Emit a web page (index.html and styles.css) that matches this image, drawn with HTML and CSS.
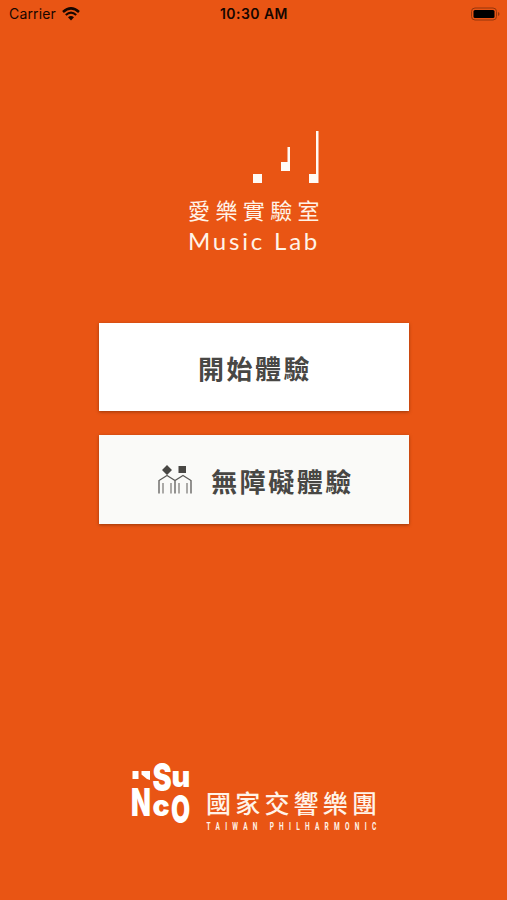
FILE: index.html
```html
<!DOCTYPE html>
<html lang="zh-Hant">
<head>
    <meta charset="UTF-8">
    <meta name="viewport" content="width=device-width, initial-scale=1.0">
    <title>愛樂實驗室 Music Lab</title>
    <link rel="stylesheet" href="styles.css">
</head>
<body>
    <div class="status-bar">
        <div class="carrier">
            <span>Carrier</span>
            <svg class="wifi" width="18" height="14" viewBox="0 0 18 14">
                <path d="M1 5Q9-2.200 17 5" fill="none" stroke="#160600" stroke-width="2.500"/>
                <path d="M3.800 8Q9 3.400 14.200 8" fill="none" stroke="#160600" stroke-width="2.200"/>
                <path d="M6 10.300Q9 7.900 12 10.300L9 13.500Z" fill="#160600"/>
            </svg>
        </div>
        <div class="time">10:30 AM</div>
        <svg class="battery" width="30" height="14" viewBox="0 0 30 14">
            <rect x="1.500" y="1" width="25" height="12" rx="3.500" fill="none" stroke="#94360c"/>
            <rect x="3.500" y="3" width="21" height="8" rx="1.500" fill="#000"/>
            <path d="M28 5Q29.500 5.500 29.500 7T28 9Z" fill="#94360c"/>
        </svg>
    </div>

    <header class="logo">
        <svg class="notes" width="68" height="54" viewBox="0 0 68 54" fill="#fffaf5">
            <rect x="1" y="44" width="9" height="9"/>
            <path d="M29 32H35.500V17H38V41H29Z"/>
            <path d="M57 44H64V1H66.500V53H57Z"/>
        </svg>
        <h1>愛樂實驗室</h1>
        <p>Music Lab</p>
    </header>

    <main class="menu">
        <button class="btn">開始體驗</button>
        <button class="btn btn-access">
            <svg width="34" height="30" viewBox="0 0 34 30">
                <path d="M9 0L14 5L9 10L4 5Z M20.500 1H28V8H20.500Z" fill="#484744"/>
                <path d="M1 28.500V15.500L9 10.500L17 15.500L25 10.500L33 15.500V28.500M17 15.500V28.500" fill="none" stroke="#5c5b58" stroke-width="1.300"/>
                <path d="M5 18V28.500M13 18V28.500M21 18V28.500M29 18V28.500" stroke="#777673" stroke-width="1.200"/>
            </svg>
            <span>無障礙體驗</span>
        </button>
    </main>

    <footer class="brand">
        <svg class="mark" width="60" height="62" viewBox="0 0 60 62" fill="#fff">
            <path d="M1.500 9H7.500V17H1.500Z M10.500 9H19V18L16 17L10.500 12.500Z"/>
            <g class="mark-text">
                <text transform="translate(21.500 29) scale(.76 1)" font-size="38">S</text>
                <text transform="translate(40.500 25) scale(1 1)" font-size="29">u</text>
                <text transform="translate(0 54) scale(.68 1)" font-size="38">N</text>
                <text transform="translate(21.500 54) scale(.98 1)" font-size="29">c</text>
                <text transform="translate(40 60.500) scale(.65 1)" font-size="38">O</text>
            </g>
        </svg>
        <div class="brand-name">
            <div class="brand-zh">國家交響樂團</div>
            <svg width="171" height="10" viewBox="0 0 171 10" fill="#fff3e8">
                <text class="brand-en" transform="translate(.500 8.500) scale(.65 1)" textLength="261">TAIWAN PHILHARMONIC</text>
            </svg>
        </div>
    </footer>
</body>
</html>
```
FILE: styles.css
```css
* {
    box-sizing: border-box;
}

body {
    display: flex;
    flex-direction: column;
    align-items: center;
    width: 100%;
    height: 100vh;
    margin: 0;
    overflow: hidden;
    background: #e95514;
    font-family: Inter, "Noto Sans CJK TC", sans-serif;
}

svg {
    display: block;
    flex: none;
    overflow: visible;
}

.status-bar {
    display: grid;
    grid-template-columns: 1fr auto 1fr;
    align-items: center;
    width: 100%;
    height: 27px;
    padding: 0 7px 0 9px;
    color: #160600;
    font-size: 14px;
}

.carrier {
    display: flex;
    align-items: center;
    gap: 6px;
    letter-spacing: 0.150px;
}

.time {
    margin-right: 1px;
    font-weight: 600;
    letter-spacing: 0.450px;
}

.battery {
    justify-self: end;
}

.logo {
    width: 131px;
    margin-top: 103px;
    color: #fff3e8;
}

.notes {
    margin-left: 64px;
}

.logo h1 {
    margin: 12px 0 0;
    font-size: 22px;
    font-weight: 400;
    line-height: 30px;
    letter-spacing: 5.400px;
    white-space: nowrap;
}

.logo p {
    margin: 0;
    font-family: Lato, sans-serif;
    font-size: 24px;
    line-height: 30px;
    letter-spacing: 2.800px;
    white-space: nowrap;
}

.menu {
    display: flex;
    flex-direction: column;
    gap: 24px;
    width: 310px;
    margin-top: 66.500px;
}

.btn {
    display: flex;
    align-items: center;
    justify-content: center;
    height: 88.500px;
    padding: 2px 0 0 3px;
    border: 0;
    background: #fff;
    box-shadow: 0 1px 3px rgba(80, 30, 0, 0.5);
    color: #484744;
    font-family: "Noto Sans CJK TC", sans-serif;
    font-size: 26px;
    font-weight: 700;
    letter-spacing: 2.500px;
}

.btn-access {
    gap: 19px;
    padding-left: 5px;
    background: #fafaf8;
}

.brand {
    display: flex;
    align-items: flex-end;
    gap: 15px;
    width: 245px;
    margin-top: auto;
    margin-bottom: 69px;
}

.mark {
    margin-bottom: 7px;
}

.mark-text {
    font-family: Inter, sans-serif;
    font-weight: 900;
}

.brand-zh {
    color: #fff3e8;
    font-size: 25px;
    font-weight: 500;
    line-height: 34px;
    letter-spacing: 4.200px;
    white-space: nowrap;
}

.brand-en {
    font-family: Roboto, sans-serif;
    font-size: 10px;
    font-weight: 700;
}
```
